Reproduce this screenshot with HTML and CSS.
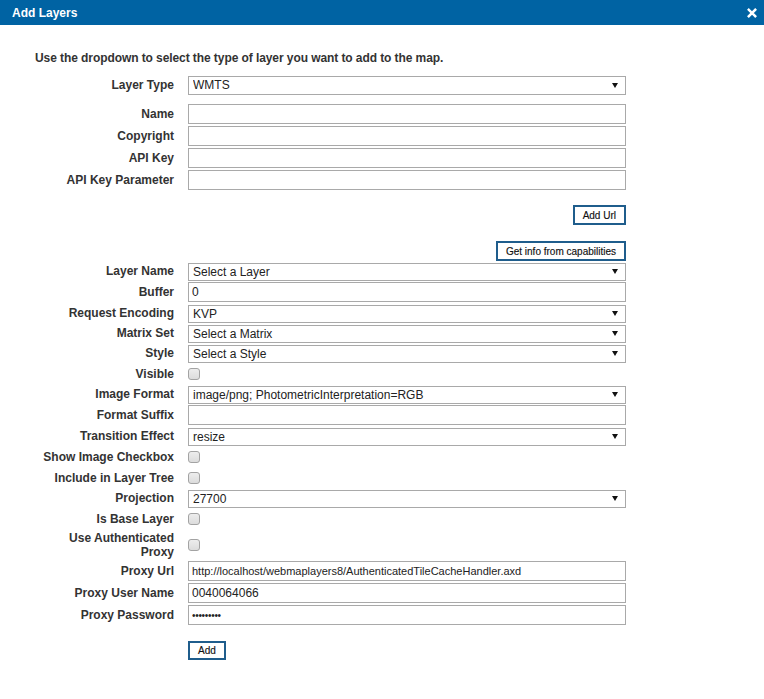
FILE: index.html
```html
<!DOCTYPE html>
<html>
<head>
<meta charset="utf-8">
<title>Add Layers</title>
<link rel="stylesheet" href="styles.css">
</head>
<body>
<div class="dialog">
  <div class="titlebar">
    <span class="title">Add Layers</span>
    <svg class="close" width="10" height="10" viewBox="0 0 10 10" aria-hidden="true">
      <path d="M1.8 1.8 L8.2 8.2 M8.2 1.8 L1.8 8.2" stroke="#fff" stroke-width="2.5" stroke-linecap="square"/>
    </svg>
  </div>
  <div class="content">
    <p class="intro">Use the dropdown to select the type of layer you want to add to the map.</p>
    <div class="form">
      <div class="row sel gap-after">
        <label>Layer Type</label>
        <div class="select"><select><option>WMTS</option></select></div>
      </div>
      <div class="row txt"><label>Name</label><input type="text" value=""></div>
      <div class="row txt"><label>Copyright</label><input type="text" value=""></div>
      <div class="row txt"><label>API Key</label><input type="text" value=""></div>
      <div class="row txt"><label>API Key Parameter</label><input type="text" value=""></div>
      <div class="row btnrow first"><span></span><button class="btn right">Add Url</button></div>
      <div class="row btnrow second"><span></span><button class="btn right">Get info from capabilities</button></div>
      <div class="row sel"><label>Layer Name</label><div class="select"><select><option>Select a Layer</option></select></div></div>
      <div class="row txt"><label>Buffer</label><input type="text" value="0"></div>
      <div class="row sel"><label>Request Encoding</label><div class="select"><select><option>KVP</option></select></div></div>
      <div class="row sel"><label>Matrix Set</label><div class="select"><select><option>Select a Matrix</option></select></div></div>
      <div class="row sel"><label>Style</label><div class="select"><select><option>Select a Style</option></select></div></div>
      <div class="row chk"><label>Visible</label><input type="checkbox"></div>
      <div class="row sel"><label>Image Format</label><div class="select"><select><option>image/png; PhotometricInterpretation=RGB</option></select></div></div>
      <div class="row txt"><label>Format Suffix</label><input type="text" value=""></div>
      <div class="row sel"><label>Transition Effect</label><div class="select"><select><option>resize</option></select></div></div>
      <div class="row chk"><label>Show Image Checkbox</label><input type="checkbox"></div>
      <div class="row chk"><label>Include in Layer Tree</label><input type="checkbox"></div>
      <div class="row sel"><label>Projection</label><div class="select"><select><option>27700</option></select></div></div>
      <div class="row chk"><label>Is Base Layer</label><input type="checkbox"></div>
      <div class="row chk tall"><label>Use Authenticated<br>Proxy</label><input type="checkbox"></div>
      <div class="row txt"><label>Proxy Url</label><input type="text" class="small" value="http://localhost/webmaplayers8/AuthenticatedTileCacheHandler.axd"></div>
      <div class="row txt"><label>Proxy User Name</label><input type="text" value="0040064066"></div>
      <div class="row txt"><label>Proxy Password</label><input type="password" class="pw" value="123456789"></div>
      <div class="row btnrow last"><span></span><button class="btn left">Add</button></div>
    </div>
  </div>
</div>
</body>
</html>
```

FILE: styles.css
```css
html, body {
  margin: 0;
  padding: 0;
  background: #fff;
}

body {
  font-family: "Liberation Sans", Arial, sans-serif;
  color: #333;
}

.dialog {
  width: 764px;
  min-height: 699px;
  background: #fff;
}

.titlebar {
  height: 25px;
  background: #0063a3;
  display: flex;
  align-items: center;
  justify-content: space-between;
  padding: 0 7px 0 12px;
}

.title {
  color: #fff;
  font-weight: bold;
  font-size: 12px;
}

.close {
  display: block;
}

.content {
  padding: 0;
}

.intro {
  margin: 26px 0 10px 35px;
  font-size: 12px;
  line-height: 14px;
  font-weight: bold;
  letter-spacing: -0.08px;
  color: #333;
}

.form {
  display: flex;
  flex-direction: column;
}

.row {
  display: grid;
  grid-template-columns: 174px 438px;
  column-gap: 14px;
  align-items: center;
  margin-bottom: 2px;
}

.row label {
  text-align: right;
  font-size: 12px;
  font-weight: bold;
  line-height: 14px;
  color: #333;
}

.row.gap-after {
  margin-bottom: 10px;
}

.row.sel {
  height: 18px;
}

.row.sel.gap-after {
  height: 19px;
}

.row.txt {
  height: 20px;
}

.row.chk {
  height: 19px;
}

.row.chk.tall {
  height: 29px;
}

.select {
  position: relative;
  height: 100%;
}

.select select {
  -webkit-appearance: none;
  appearance: none;
  box-sizing: border-box;
  width: 100%;
  height: 100%;
  margin: 0;
  border: 1px solid #a9a9a9;
  border-radius: 0;
  background: #fff;
  font-family: "Liberation Sans", Arial, sans-serif;
  font-size: 12px;
  color: #222;
  padding: 0 0 0 4px;
  outline: none;
}

.select::after {
  content: "";
  position: absolute;
  right: 8px;
  top: 50%;
  margin-top: -2px;
  border-left: 3.5px solid transparent;
  border-right: 3.5px solid transparent;
  border-top: 5px solid #111;
  pointer-events: none;
}

input[type="text"],
input[type="password"] {
  box-sizing: border-box;
  width: 100%;
  height: 20px;
  margin: 0;
  border: 1px solid #a9a9a9;
  border-radius: 0;
  padding: 0 3px;
  font-family: "Liberation Sans", Arial, sans-serif;
  font-size: 12px;
  color: #222;
  background: #fff;
  outline: none;
}

input.small {
  font-size: 11px;
}

input.pw {
  font-size: 10px;
  letter-spacing: -0.3px;
}

input[type="checkbox"] {
  -webkit-appearance: none;
  appearance: none;
  width: 12px;
  height: 12px;
  margin: 0;
  border: 1px solid #a3a3a3;
  border-radius: 3px;
  background: linear-gradient(#ededed, #dcdcdc);
  box-sizing: border-box;
}

.row.btnrow {
  height: 20px;
}

.row.btnrow.first {
  margin-top: 13px;
}

.row.btnrow.second {
  margin-top: 14px;
  margin-bottom: 1px;
}

.row.btnrow.last {
  margin-top: 14px;
  height: 19px;
}

.btn {
  box-sizing: border-box;
  height: 100%;
  background: #fff;
  border: 2px solid #1f5d8c;
  border-radius: 0;
  font-family: "Liberation Sans", Arial, sans-serif;
  font-size: 10px;
  color: #111;
  -webkit-text-stroke: 0.15px #111;
  padding: 0 8px;
  margin: 0;
  cursor: pointer;
}

.btn.right {
  justify-self: end;
}

.btn.left {
  justify-self: start;
  padding: 0 8px;
}
```
